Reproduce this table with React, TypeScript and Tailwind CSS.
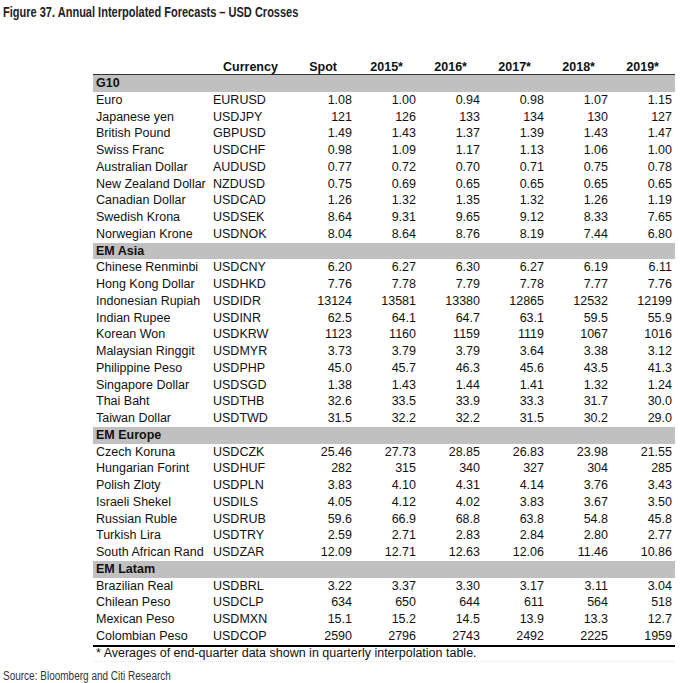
import React from 'react';

type Row = [string, string, string, string, string, string, string, string];

const sections: { title: string; rows: Row[] }[] = [
  {
    title: 'G10',
    rows: [
      ['Euro', 'EURUSD', '1.08', '1.00', '0.94', '0.98', '1.07', '1.15'],
      ['Japanese yen', 'USDJPY', '121', '126', '133', '134', '130', '127'],
      ['British Pound', 'GBPUSD', '1.49', '1.43', '1.37', '1.39', '1.43', '1.47'],
      ['Swiss Franc', 'USDCHF', '0.98', '1.09', '1.17', '1.13', '1.06', '1.00'],
      ['Australian Dollar', 'AUDUSD', '0.77', '0.72', '0.70', '0.71', '0.75', '0.78'],
      ['New Zealand Dollar', 'NZDUSD', '0.75', '0.69', '0.65', '0.65', '0.65', '0.65'],
      ['Canadian Dollar', 'USDCAD', '1.26', '1.32', '1.35', '1.32', '1.26', '1.19'],
      ['Swedish Krona', 'USDSEK', '8.64', '9.31', '9.65', '9.12', '8.33', '7.65'],
      ['Norwegian Krone', 'USDNOK', '8.04', '8.64', '8.76', '8.19', '7.44', '6.80'],
    ],
  },
  {
    title: 'EM Asia',
    rows: [
      ['Chinese Renminbi', 'USDCNY', '6.20', '6.27', '6.30', '6.27', '6.19', '6.11'],
      ['Hong Kong Dollar', 'USDHKD', '7.76', '7.78', '7.79', '7.78', '7.77', '7.76'],
      ['Indonesian Rupiah', 'USDIDR', '13124', '13581', '13380', '12865', '12532', '12199'],
      ['Indian Rupee', 'USDINR', '62.5', '64.1', '64.7', '63.1', '59.5', '55.9'],
      ['Korean Won', 'USDKRW', '1123', '1160', '1159', '1119', '1067', '1016'],
      ['Malaysian Ringgit', 'USDMYR', '3.73', '3.79', '3.79', '3.64', '3.38', '3.12'],
      ['Philippine Peso', 'USDPHP', '45.0', '45.7', '46.3', '45.6', '43.5', '41.3'],
      ['Singapore Dollar', 'USDSGD', '1.38', '1.43', '1.44', '1.41', '1.32', '1.24'],
      ['Thai Baht', 'USDTHB', '32.6', '33.5', '33.9', '33.3', '31.7', '30.0'],
      ['Taiwan Dollar', 'USDTWD', '31.5', '32.2', '32.2', '31.5', '30.2', '29.0'],
    ],
  },
  {
    title: 'EM Europe',
    rows: [
      ['Czech Koruna', 'USDCZK', '25.46', '27.73', '28.85', '26.83', '23.98', '21.55'],
      ['Hungarian Forint', 'USDHUF', '282', '315', '340', '327', '304', '285'],
      ['Polish Zloty', 'USDPLN', '3.83', '4.10', '4.31', '4.14', '3.76', '3.43'],
      ['Israeli Shekel', 'USDILS', '4.05', '4.12', '4.02', '3.83', '3.67', '3.50'],
      ['Russian Ruble', 'USDRUB', '59.6', '66.9', '68.8', '63.8', '54.8', '45.8'],
      ['Turkish Lira', 'USDTRY', '2.59', '2.71', '2.83', '2.84', '2.80', '2.77'],
      ['South African Rand', 'USDZAR', '12.09', '12.71', '12.63', '12.06', '11.46', '10.86'],
    ],
  },
  {
    title: 'EM Latam',
    rows: [
      ['Brazilian Real', 'USDBRL', '3.22', '3.37', '3.30', '3.17', '3.11', '3.04'],
      ['Chilean Peso', 'USDCLP', '634', '650', '644', '611', '564', '518'],
      ['Mexican Peso', 'USDMXN', '15.1', '15.2', '14.5', '13.9', '13.3', '12.7'],
      ['Colombian Peso', 'USDCOP', '2590', '2796', '2743', '2492', '2225', '1959'],
    ],
  },
];

const years = ['2015*', '2016*', '2017*', '2018*', '2019*'];
const cols = 'grid grid-cols-[117px_78px_64px_64px_64px_64px_64px_64px]';

export default function App() {
  return (
    <div className="w-[680px] h-[683px] bg-white text-[#111] relative overflow-hidden font-['Liberation_Sans',Arial,sans-serif]">
      {/* condensed look: narrow fonts aren't installed, so squeeze horizontally */}
      <div className="pl-[3px] pt-[5px] h-[20px]">
        <div className="w-max origin-left scale-x-[0.76] whitespace-nowrap font-bold text-[14.5px] leading-none text-[#222]">
          Figure 37. Annual Interpolated Forecasts – USD Crosses
        </div>
      </div>

      <div className="ml-[93px] w-[582px] mt-[38px] text-[12.5px]">
        {/* header */}
        <div className={`${cols} h-[17px] items-center font-bold border-b border-[#333]`}>
          <div />
          <div className="pl-[13px]">Currency</div>
          <div className="text-right pr-[15px]">Spot</div>
          {years.map(y => (
            <div key={y} className="text-right pr-[13px]">{y}</div>
          ))}
        </div>

        <div className="border-b-2 border-black">
          {sections.map(s => (
            <div key={s.title}>
              <div className="h-[16.75px] bg-[#c0c0c0] flex items-center pl-[3px] font-bold">{s.title}</div>
              {s.rows.map(r => (
                <div key={r[1]} className={`${cols} h-[16.75px] items-center leading-none pr-[3px]`}>
                  <div className="pl-[3px] whitespace-nowrap">{r[0]}</div>
                  <div className="pl-[3px]">{r[1]}</div>
                  {r.slice(2).map((v, i) => (
                    <div key={i} className="text-right">{v}</div>
                  ))}
                </div>
              ))}
            </div>
          ))}
        </div>

        <div className="h-[15px] flex items-center pl-[3px] border-b border-dotted border-[#e6e6e6]">
          * Averages of end-quarter data shown in quarterly interpolation table.
        </div>
      </div>

      <div className="pl-[3px] pt-[8px]">
        <div className="w-max origin-left scale-x-[0.8] whitespace-nowrap text-[12.5px] leading-none text-[#333]">
          Source: Bloomberg and Citi Research
        </div>
      </div>
    </div>
  );
}
